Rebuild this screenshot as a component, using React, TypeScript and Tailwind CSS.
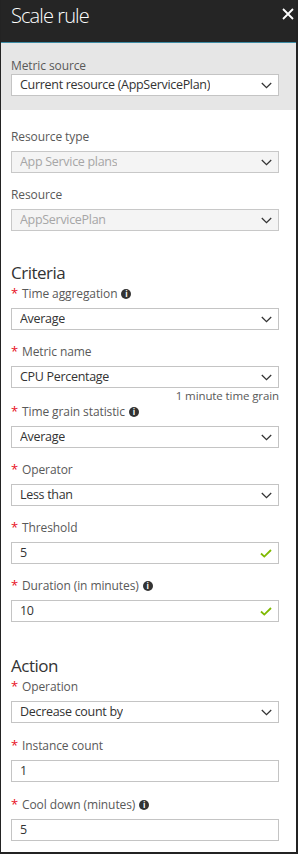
import type { ReactNode } from "react";

const font = { fontFamily: '"Open Sans", "Noto Sans", sans-serif' };

function Chevron() {
  return (
    <svg width="11" height="7" viewBox="0 0 11 7" className="shrink-0">
      <path d="M0.8 1 L5.5 5.6 L10.2 1" fill="none" stroke="#333" strokeWidth="1.3" />
    </svg>
  );
}

function Check() {
  return (
    <svg width="12" height="9" viewBox="0 0 12 9" className="shrink-0">
      <path d="M1 4.5 L4.3 7.6 L11 1" fill="none" stroke="#7fba00" strokeWidth="1.8" />
    </svg>
  );
}

function Info() {
  return (
    <span className="ml-[4px] inline-flex h-[10px] w-[10px] items-center justify-center rounded-full bg-[#333] text-[8px] font-bold leading-none text-white">
      i
    </span>
  );
}

function Label({ text, req, info }: { text: string; req?: boolean; info?: boolean }) {
  return (
    <div className="flex h-4 items-center text-[12px] leading-4 tracking-[-0.1px] text-[#595959]">
      {req && <span className="mr-[6px] -mt-[3px] w-[5px] text-[13px] text-[#e81123]">*</span>}
      <span>{text}</span>
      {info && <Info />}
    </div>
  );
}

function Box({ value, select, check, disabled }: { value: string; select?: boolean; check?: boolean; disabled?: boolean }) {
  return (
    <div
      className={
        "flex h-[22px] w-[268px] items-center justify-between border pl-[8px] pr-[6px] text-[12.5px] tracking-[-0.3px] " +
        (disabled ? "border-[#c8c8c8] bg-[#f4f4f4] text-[#a6a6a6]" : "border-[#c4c4c4] bg-white text-[#333]")
      }
    >
      <span className="truncate">{value}</span>
      {select && <Chevron />}
      {check && <Check />}
    </div>
  );
}

function Field({ label, className = "mt-[14px]", children, req, info }: { label: string; className?: string; children: ReactNode; req?: boolean; info?: boolean }) {
  return (
    <div className={className}>
      <Label text={label} req={req} info={info} />
      <div className="mt-[6px]">{children}</div>
    </div>
  );
}

export default function App() {
  return (
    <div style={font} className="flex h-[854px] w-[298px] flex-col border-b-2 border-l border-r-2 border-[#232323] bg-white">
      {/* header */}
      <div className="flex h-[42px] shrink-0 items-start justify-between bg-[#252525] pl-[10px] pr-[2px] pt-[2px]">
        <span className="text-[20px] font-light leading-[28px] tracking-[-0.9px] text-white">Scale rule</span>
        <svg width="12" height="12" viewBox="0 0 12 12" className="mt-[6px]">
          <path d="M1 1 L11 11 M11 1 L1 11" stroke="#fff" strokeWidth="1.8" />
        </svg>
      </div>
      <div className="h-px shrink-0 bg-[#3d8ca5]" />

      {/* metric source */}
      <div className="bg-[#e6e6e6] pb-[14px] pl-[10px] pt-[15px]">
        <Label text="Metric source" />
        <Box value="Current resource (AppServicePlan)" select />
      </div>

      <div className="pl-[10px] pt-[5px]">
        <Field label="Resource type">
          <Box value="App Service plans" select disabled />
        </Field>
        <Field label="Resource">
          <Box value="AppServicePlan" select disabled />
        </Field>

        <div className="mt-[30px] h-6 text-[17px] leading-6 tracking-[-0.5px] text-[#333]">Criteria</div>
        <Field label="Time aggregation" req info className="mt-[1px]">
          <Box value="Average" select />
        </Field>
        <Field label="Metric name" req>
          <Box value="CPU Percentage" select />
        </Field>
        <div className="h-4 w-[268px] text-right text-[11.5px] leading-4 tracking-[-0.1px] text-[#595959]">1 minute time grain</div>
        <Field label="Time grain statistic" req info className="mt-0">
          <Box value="Average" select />
        </Field>
        <Field label="Operator" req>
          <Box value="Less than" select />
        </Field>
        <Field label="Threshold" req>
          <Box value="5" check />
        </Field>
        <Field label="Duration (in minutes)" req info>
          <Box value="10" check />
        </Field>

        <div className="mt-[32px] h-6 text-[17px] leading-6 tracking-[-0.5px] text-[#333]">Action</div>
        <Field label="Operation" req className="mt-[1px]">
          <Box value="Decrease count by" select />
        </Field>
        <Field label="Instance count" req className="mt-[15px]">
          <Box value="1" />
        </Field>
        <Field label="Cool down (minutes)" req info className="mt-[15px]">
          <Box value="5" />
        </Field>
      </div>
    </div>
  );
}
